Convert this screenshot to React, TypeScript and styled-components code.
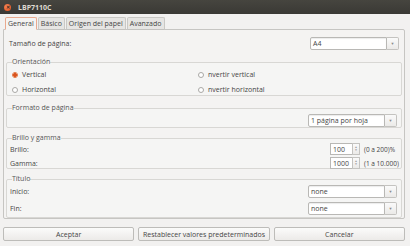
import React from 'react';
import styled, { createGlobalStyle } from 'styled-components';

const GlobalStyle = createGlobalStyle`
  html, body {
    margin: 0;
    padding: 0;
    background: #f2f1f0;
  }
  body {
    font-family: 'Open Sans', 'Liberation Sans', sans-serif;
    font-size: 7px;
    color: #454545;
  }
`;

const Window = styled.div`
  width: 410px;
  height: 246px;
  display: flex;
  flex-direction: column;
  background: #f2f1f0;
  overflow: hidden;
`;

const TitleBar = styled.div`
  height: 14px;
  display: flex;
  align-items: center;
  gap: 7px;
  padding-left: 4px;
  background: linear-gradient(#46453f, #3a3935);
  color: #dfdbd2;
  font-weight: 700;
  font-size: 7px;
`;

const CloseDot = styled.div`
  width: 7px;
  height: 7px;
  border-radius: 50%;
  background: radial-gradient(circle at 40% 35%, #f58a5c, #df4a16);
  display: flex;
  align-items: center;
  justify-content: center;
  color: #3c2a22;
  font-size: 5px;
  line-height: 1;
`;

const TabRow = styled.div`
  display: flex;
  gap: 1px;
  padding: 3px 0 0 5px;
  height: 13px;
  margin-bottom: -1px;
  position: relative;
  z-index: 1;
`;

const Tab = styled.div<{ $active?: boolean }>`
  height: 13px;
  box-sizing: border-box;
  padding: 0 2px;
  display: flex;
  align-items: center;
  border: 1px solid ${(p) => (p.$active ? '#e9a98e' : '#c9c8c5')};
  border-bottom-color: ${(p) => (p.$active ? '#f4f3f2' : '#c3c2bf')};
  border-radius: 2px 2px 0 0;
  background: ${(p) => (p.$active ? '#f4f3f2' : '#e6e5e3')};
`;

const Panel = styled.div`
  margin: 0 5px 0 3px;
  height: 190px;
  box-sizing: border-box;
  border: 1px solid #c6c5c2;
  border-radius: 0 2px 2px 2px;
  background: #f4f3f2;
  padding: 6px 2px 0 2px;
  display: flex;
  flex-direction: column;
`;

const FieldRow = styled.div<{ $h?: number; $pad?: boolean; $end?: boolean }>`
  display: flex;
  align-items: center;
  justify-content: ${(p) => (p.$end ? 'flex-end' : 'space-between')};
  height: ${(p) => p.$h ?? 14}px;
  padding: ${(p) => (p.$pad ? '0 3px' : '0')};
`;

const Group = styled.fieldset<{ $h: number; $mt: number }>`
  margin: ${(p) => p.$mt}px 0 0 0;
  padding: 0 4px 0 3px;
  height: ${(p) => p.$h}px;
  box-sizing: border-box;
  border: 1px solid #d8d7d4;
  border-radius: 2px;
  background: #f5f5f4;
  min-width: 0;
`;

const Legend = styled.legend`
  padding: 0;
  margin-left: 2px;
  color: #555;
  line-height: 8px;
`;

const RadioGrid = styled.div`
  display: grid;
  grid-template-columns: 186px 1fr;
  row-gap: 4px;
  padding: 3px 0 0 2px;
`;

const RadioItem = styled.div`
  display: flex;
  align-items: center;
  gap: 4px;
  height: 11px;
`;

const RadioCircle = styled.span<{ $checked?: boolean }>`
  width: 6px;
  height: 6px;
  border-radius: 50%;
  box-sizing: border-box;
  border: 1px solid ${(p) => (p.$checked ? '#e2733d' : '#a9a8a5')};
  background: ${(p) => (p.$checked ? 'radial-gradient(circle, #d9531e 0 1.6px, #fbe3d6 1.8px)' : '#fff')};
`;

const Combo = styled.div`
  display: flex;
  width: 89px;
  height: 13px;
  box-sizing: border-box;
`;

const ComboField = styled.div`
  flex: 1;
  border: 1px solid #b9b8b5;
  border-radius: 2px 0 0 2px;
  background: #fff;
  display: flex;
  align-items: center;
  padding-left: 2px;
  box-shadow: inset 0 1px 1px rgba(0, 0, 0, 0.08);
`;

const ComboButton = styled.div`
  width: 11px;
  border: 1px solid #c4c3c0;
  border-left: none;
  border-radius: 0 2px 2px 0;
  background: linear-gradient(#fafafa, #ebeae8);
  display: flex;
  align-items: center;
  justify-content: center;
  color: #8a8a8a;
  font-size: 4px;
`;

const SpinRow = styled.div`
  display: flex;
  align-items: center;
  gap: 4px;
  width: 70px;
  margin-right: -3px;
`;

const Spin = styled.div`
  display: flex;
  width: 30px;
  height: 12px;
  flex-shrink: 0;
`;

const SpinField = styled.div`
  flex: 1;
  border: 1px solid #b9b8b5;
  border-right: none;
  background: #fff;
  display: flex;
  align-items: center;
  padding-left: 2px;
`;

const SpinArrows = styled.div`
  width: 6px;
  border: 1px solid #c4c3c0;
  background: linear-gradient(#fafafa, #ebeae8);
  display: flex;
  flex-direction: column;
  align-items: center;
  justify-content: center;
  color: #999;
  font-size: 3px;
  line-height: 3px;
`;

const Hint = styled.span`
  white-space: nowrap;
  font-size: 6.5px;
`;

const ButtonBar = styled.div`
  display: flex;
  gap: 4px;
  padding: 8px 5px 0 3px;
`;

const DialogButton = styled.button`
  flex: 1;
  height: 14px;
  padding: 0;
  font: inherit;
  color: #454545;
  border: 1px solid #bdbcb9;
  border-radius: 2px;
  background: linear-gradient(#fbfbfa, #eceae8);
`;

const ComboBox: React.FC<{ value: string }> = ({ value }) => (
  <Combo>
    <ComboField>{value}</ComboField>
    <ComboButton>▼</ComboButton>
  </Combo>
);

const SpinBox: React.FC<{ value: string; hint: string }> = ({ value, hint }) => (
  <SpinRow>
    <Spin>
      <SpinField>{value}</SpinField>
      <SpinArrows>
        <span>▲</span>
        <span>▼</span>
      </SpinArrows>
    </Spin>
    <Hint>{hint}</Hint>
  </SpinRow>
);

const App: React.FC = () => (
  <Window>
    <GlobalStyle />
    <TitleBar>
      <CloseDot>✕</CloseDot>
      LBP7110C
    </TitleBar>
    <TabRow>
      <Tab $active>General</Tab>
      <Tab>Básico</Tab>
      <Tab>Origen del papel</Tab>
      <Tab>Avanzado</Tab>
    </TabRow>
    <Panel>
      <FieldRow $pad>
        <span>Tamaño de página:</span>
        <ComboBox value="A4" />
      </FieldRow>
      <Group $h={38} $mt={8}>
        <Legend>Orientación</Legend>
        <RadioGrid>
          <RadioItem>
            <RadioCircle $checked />
            Vertical
          </RadioItem>
          <RadioItem>
            <RadioCircle />
            nvertir vertical
          </RadioItem>
          <RadioItem>
            <RadioCircle />
            Horizontal
          </RadioItem>
          <RadioItem>
            <RadioCircle />
            nvertir horizontal
          </RadioItem>
        </RadioGrid>
      </Group>
      <Group $h={24} $mt={8}>
        <Legend>Formato de página</Legend>
        <FieldRow $h={16} $end>
          <ComboBox value="1 página por hoja" />
        </FieldRow>
      </Group>
      <Group $h={35} $mt={6}>
        <Legend>Brillo y gamma</Legend>
        <FieldRow $h={14}>
          <span>Brillo:</span>
          <SpinBox value="100" hint="(0 a 200)%" />
        </FieldRow>
        <FieldRow $h={14}>
          <span>Gamma:</span>
          <SpinBox value="1000" hint="(1 a 10.000)" />
        </FieldRow>
      </Group>
      <Group $h={43} $mt={6}>
        <Legend>Título</Legend>
        <FieldRow $h={17}>
          <span>Inicio:</span>
          <ComboBox value="none" />
        </FieldRow>
        <FieldRow $h={17}>
          <span>Fin:</span>
          <ComboBox value="none" />
        </FieldRow>
      </Group>
    </Panel>
    <ButtonBar>
      <DialogButton>Aceptar</DialogButton>
      <DialogButton>Restablecer valores predeterminados</DialogButton>
      <DialogButton>Cancelar</DialogButton>
    </ButtonBar>
  </Window>
);

export default App;
